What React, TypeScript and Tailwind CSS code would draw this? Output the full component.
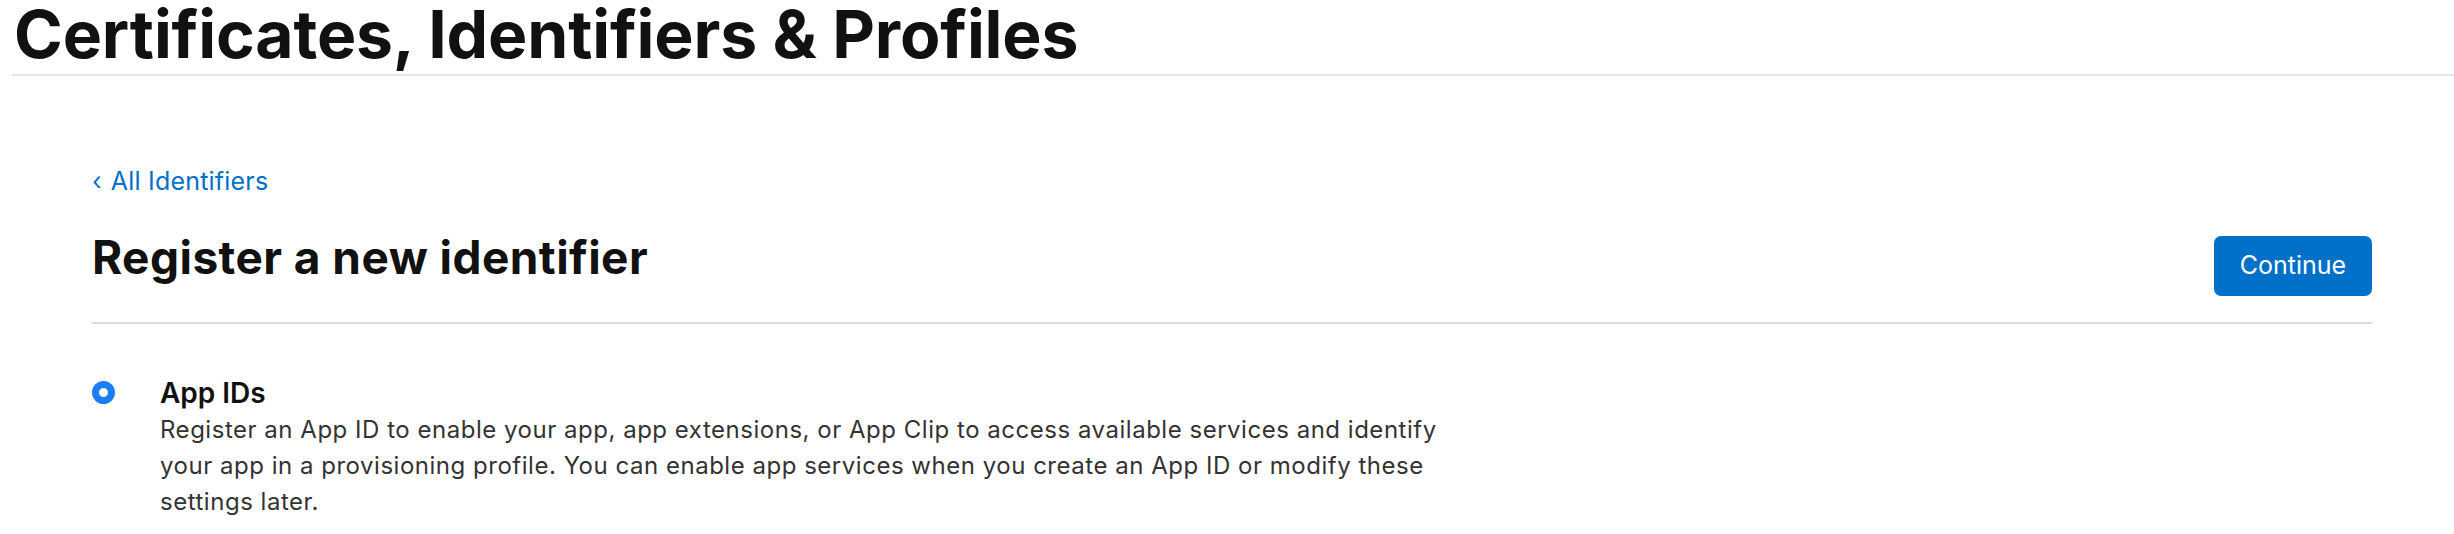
import React from "react";

const App: React.FC = () => {
  return (
    <div className="w-[2454px] h-[534px] overflow-hidden bg-white font-['Inter',sans-serif] text-[#1d1d1f]">
      <header className="ml-3 border-b-2 border-[#e5e5e5]">
        <h1 className="pl-[2px] pb-[6px] text-[66px] font-bold leading-[68px] tracking-[-0.15px] text-[#111]">
          Certificates, Identifiers &amp; Profiles
        </h1>
      </header>

      <main className="px-[92px] w-[2464px]">
        <a className="mt-[90px] flex items-center gap-[9px] text-[25px] leading-[30px] tracking-[0.2px] text-[#0070c9]">
          <span>‹</span>
          <span>All Identifiers</span>
        </a>

        <div className="mt-[35px] flex items-start justify-between border-b-2 border-[#dcdcdc] pb-[26px] w-[2280px]">
          <h2 className="text-[46px] font-bold leading-[52px] tracking-[0.45px] text-[#111]">
            Register a new identifier
          </h2>
          <button className="mt-[5px] h-[60px] w-[158px] rounded-[7px] bg-[#0070c9] text-[25px] text-white">
            Continue
          </button>
        </div>

        <div className="mt-[54px] flex gap-[45px]">
          <div className="mt-[3px] h-[23px] w-[23px] shrink-0 rounded-full border-[7px] border-[#1a7ef8] bg-white" />
          <div>
            <div className="text-[28px] font-semibold leading-[30px] text-[#111]">App IDs</div>
            <p className="mt-1 w-[1300px] text-[24px] leading-[36px] tracking-[0.52px] text-[#333]">
              Register an App ID to enable your app, app extensions, or App Clip to access available services and identify
              your app in a provisioning profile. You can enable app services when you create an App ID or modify these
              settings later.
            </p>
          </div>
        </div>
      </main>
    </div>
  );
};

export default App;
